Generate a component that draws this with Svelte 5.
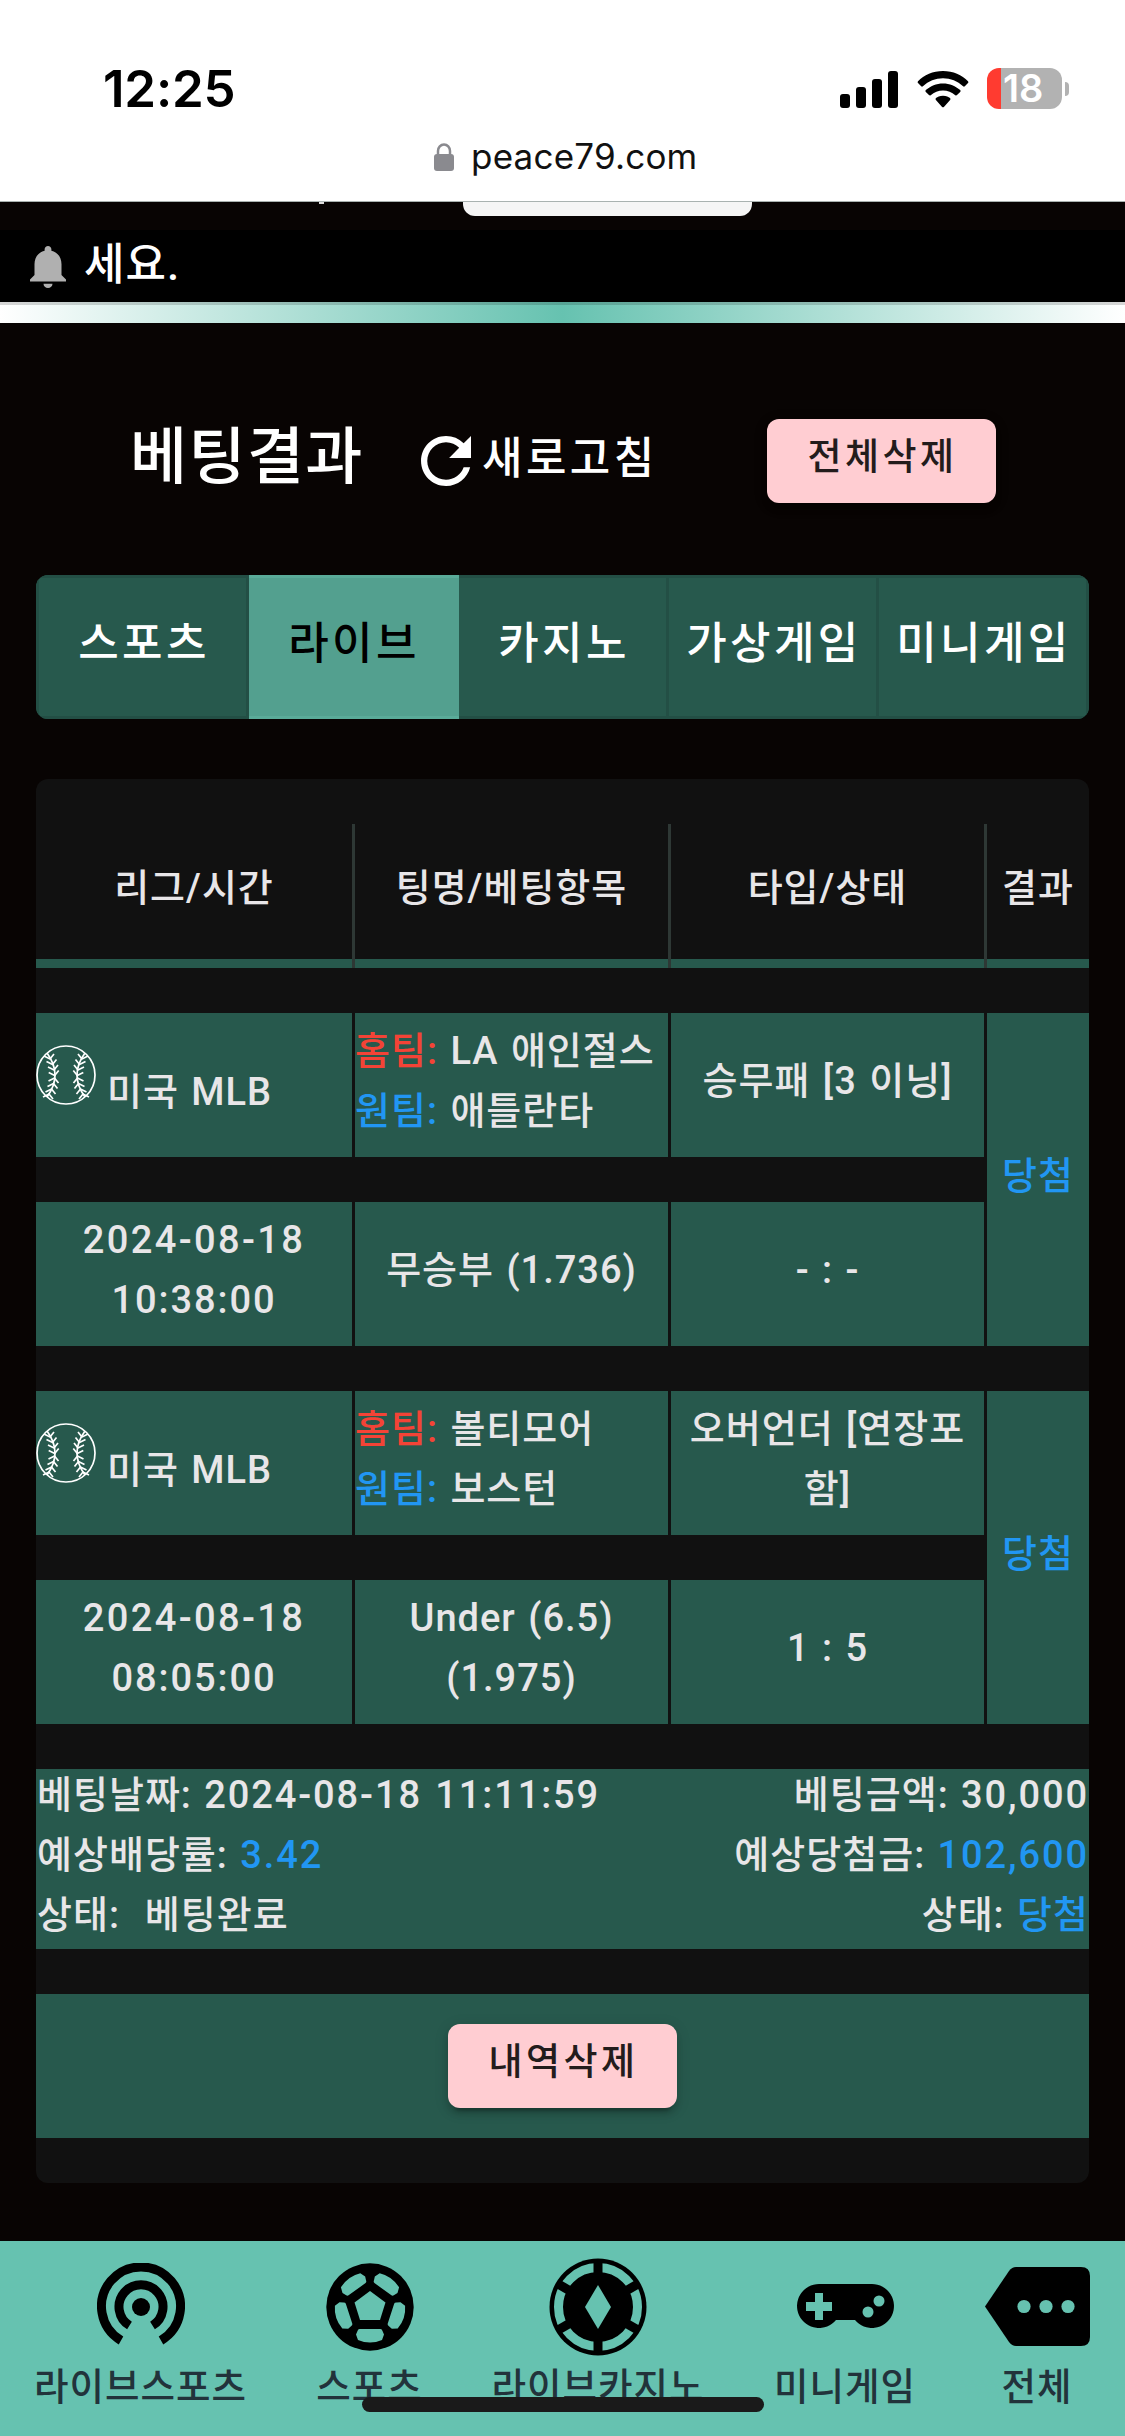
<script>
	const tabs = ['스포츠', '라이브', '카지노', '가상게임', '미니게임']
	let activeTab = '라이브'

	const headers = ['리그/시간', '팅명/베팅항목', '타입/상태', '결과']

	const bets = [
		{
			league: '미국 MLB',
			home: 'LA 애인절스',
			away: '애틀란타',
			type: '승무패 [3 이닝]',
			date: '2024-08-18',
			time: '10:38:00',
			pick: ['무승부 (1.736)'],
			score: '- : -',
			result: '당첨'
		},
		{
			league: '미국 MLB',
			home: '볼티모어',
			away: '보스턴',
			type: '오버언더 [연장포함]',
			date: '2024-08-18',
			time: '08:05:00',
			pick: ['Under (6.5)', '(1.975)'],
			score: '1 : 5',
			result: '당첨'
		}
	]

	// x, y of each stitch along the left seam of the baseball
	const stitches = [
		[14, 13], [16.5, 18.5], [18, 24], [18.7, 29.5],
		[18.5, 35], [17.5, 40.5], [15.5, 46], [13, 51]
	]
</script>

<svelte:head>
	<title>베팅결과</title>
</svelte:head>

<div class="phone">
	<header class="status">
		<span class="clock">12:25</span>
		<div class="indicators">
			<svg width="59" height="38" viewBox="0 0 59 38">
				<rect x="0" y="24" width="10" height="14" rx="3" />
				<rect x="16" y="17" width="10" height="21" rx="3" />
				<rect x="32" y="9" width="10" height="29" rx="3" />
				<rect x="48" y="1" width="10" height="37" rx="3" />
			</svg>
			<svg class="wifi" width="52" height="38" viewBox="0 0 52 38">
				<path d="M26 1C16 1 7 5 1 11.3q-.9.9 0 1.8l3.200 3.200q.8.8 1.700 0C11.500 11 18.400 8.300 26 8.300S40.500 11 46.100 16.300q.9.8 1.700 0L51 13.100q.9-.9 0-1.800C45 5 36 1 26 1z" />
				<path d="M26 13.400c-6.600 0-12.700 2.500-17.200 6.700q-.9.900 0 1.800l3.200 3.200q.8.8 1.700.1c3.400-3 7.700-4.700 12.300-4.700s8.900 1.700 12.300 4.700q.9.7 1.700-.1l3.200-3.200q.9-.9 0-1.800c-4.500-4.200-10.600-6.700-17.200-6.700z" />
				<path d="M26 25.700c-3.500 0-5.400 1-7 2.400q-1 .9-.1 1.800l6.200 7.100q.9.7 1.800 0l6.200-7.100q.9-.9-.1-1.800c-1.600-1.400-3.500-2.400-7-2.400z" />
			</svg>
			<div class="battery"><span>18</span></div>
			<i class="nub"></i>
		</div>
	</header>

	<div class="address">
		<svg width="20" height="28" viewBox="0 0 20 28">
			<path d="M4 13V8a6 6.500 0 0 1 12 0v5" fill="none" stroke="#8a8a8f" stroke-width="2.500" />
			<rect x="0" y="11" width="20" height="17" rx="3" fill="#8a8a8f" />
		</svg>
		<span>peace79.com</span>
	</div>

	<div class="cutoff"><i class="tail"></i><i class="sheet"></i></div>

	<div class="notice">
		<svg width="36" height="42" viewBox="4 2.500 16 19.500" preserveAspectRatio="none">
			<path fill="#b0b0b0" d="M12 22c1.100 0 2-.9 2-2h-4c0 1.100.9 2 2 2zm6-6v-5c0-3.070-1.630-5.640-4.500-6.320V4c0-.83-.67-1.500-1.500-1.500s-1.500.67-1.500 1.500v.68C7.640 5.360 6 7.920 6 11v5l-2 2v1h16v-1l-2-2z" />
		</svg>
		<span>세요.</span>
	</div>
	<div class="shine"></div>

	<main>
		<div class="title-row">
			<h1>베팅결과</h1>
			<div class="refresh">
				<svg width="50" height="50" viewBox="4 4 16 16">
					<path fill="#fff" d="M17.650 6.350A7.958 7.958 0 0 0 12 4c-4.420 0-7.990 3.580-7.990 8s3.570 8 7.990 8c3.730 0 6.840-2.550 7.730-6h-2.080A5.990 5.990 0 0 1 12 18c-3.310 0-6-2.690-6-6s2.690-6 6-6c1.660 0 3.140.69 4.220 1.780L13 11h7V4l-2.350 2.350z" />
				</svg>
				<span>새로고침</span>
			</div>
			<button class="pink">전체삭제</button>
		</div>

		<nav class="tabs">
			{#each tabs as tab}
				<button class:active={tab === activeTab} on:click={() => (activeTab = tab)}>{tab}</button>
			{/each}
		</nav>

		<section class="panel">
			<div class="grid head">
				{#each headers as header}
					<div class="cell">{header}</div>
				{/each}
			</div>

			{#each bets as bet}
				<div class="grid bet">
					<div class="cell league">
						<svg width="60" height="60" viewBox="0 0 60 60" fill="none" stroke="#fff" stroke-width="1.700">
							<circle cx="30" cy="30" r="29" />
							{#each ['', 'translate(60 0) scale(-1 1)'] as side}
								<g transform={side}>
									<path d="M11 8Q27 30 11 52" />
									{#each stitches as [x, y]}
										{#if y < 32}
											<path d="M{x - 6} {y - 2}L{x} {y + 1}L{x + 4} {y - 4}" />
										{:else}
											<path d="M{x - 6} {y + 1}L{x} {y - 2}L{x + 4} {y + 3}" />
										{/if}
									{/each}
								</g>
							{/each}
						</svg>
						<span>{bet.league}</span>
					</div>
					<div class="cell teams">
						<div><b class="red">홈팀:</b> {bet.home}</div>
						<div><b class="blue">원팀:</b> {bet.away}</div>
					</div>
					<div class="cell type">{bet.type}</div>
					<div class="cell result blue">{bet.result}</div>
					<div class="cell"><div class="date">{bet.date}</div><div class="num">{bet.time}</div></div>
					<div class="cell">
						{#each bet.pick as line}
							<div>{line}</div>
						{/each}
					</div>
					<div class="cell">{bet.score}</div>
				</div>
			{/each}

			<div class="summary">
				<div>
					<p>베팅날짜: <span class="num">2024-08-18 11:11:59</span></p>
					<p>예상배당률: <span class="num blue">3.42</span></p>
					<p>상태: &nbsp;베팅완료</p>
				</div>
				<div class="right">
					<p>베팅금액: <span class="num">30,000</span></p>
					<p>예상당첨금: <span class="num blue">102,600</span></p>
					<p>상태: <span class="blue">당첨</span></p>
				</div>
			</div>

			<div class="remove">
				<button class="pink">내역삭제</button>
			</div>
		</section>
	</main>

	<footer>
		<a>
			<svg width="88" height="88" viewBox="0 0 88 88" fill="none" stroke="#000" stroke-width="9">
				<circle cx="44" cy="44" r="9" fill="#000" stroke="none" />
				<path d="M32.500 62.500A22 22 0 1 1 55.500 62.500" />
				<path d="M24 77.500A39.500 39.500 0 1 1 64 77.500" />
			</svg>
			<span>라이브스포츠</span>
		</a>
		<a>
			<svg width="88" height="88" viewBox="0 0 88 88">
				<circle cx="44" cy="44" r="43.700" />
				<g fill="#66c2b0">
					<path d="M44 28L59.500 39.500L54 57H34L28.500 39.500z" />
					{#each [0, 72, 144, 216, 288] as deg}
						<path transform="rotate({deg} 44 44)" d="M33.500 66H54.500Q56 66 56.500 68L58 71.500L56 77Q44 82 32 77L30 71.500L31.500 68Q32 66 33.500 66z" />
					{/each}
				</g>
			</svg>
			<span>스포츠</span>
		</a>
		<a>
			<svg width="98" height="98" viewBox="0 0 98 98">
				<circle cx="49" cy="49" r="48.500" />
				<circle cx="49" cy="49" r="39.500" fill="none" stroke="#66c2b0" stroke-width="9" />
				<g stroke="#000" stroke-width="9">
					<path d="M49 2v94" />
					<path d="M49 2v94" transform="rotate(60 49 49)" />
					<path d="M49 2v94" transform="rotate(120 49 49)" />
				</g>
				<path fill="#66c2b0" d="M49 27L62 49L49 71L36 49z" />
			</svg>
			<span>라이브카지노</span>
		</a>
		<a>
			<svg width="97" height="45" viewBox="0 0 97 45">
				<path d="M22 0h53a22 22 0 1 1-17 36H39A22 22 0 1 1 22 0z" />
				<path fill="#66c2b0" d="M18 9h8v9h9v9h-9v9h-8v-9H9v-9h9z" />
				<circle cx="82" cy="17" r="5.500" fill="#66c2b0" />
				<circle cx="71" cy="28" r="5.500" fill="#66c2b0" />
			</svg>
			<span>미니게임</span>
		</a>
		<a>
			<svg width="105" height="79" viewBox="0 0 105 79">
				<path d="M0 39.500L24 4Q27 0 31 0H96Q105 0 105 9V70Q105 79 96 79H31Q27 79 24 75z" />
				<g fill="#66c2b0">
					<circle cx="39" cy="39.500" r="6.600" />
					<circle cx="61" cy="39.500" r="6.600" />
					<circle cx="83" cy="39.500" r="6.600" />
				</g>
			</svg>
			<span>전체</span>
		</a>
		<i class="home-bar"></i>
	</footer>
</div>

<style>
	:global(body) {
		background: #080403;
	}

	.phone {
		width: 1125px;
		height: 2436px;
		overflow: hidden;
		display: flex;
		flex-direction: column;
		background: #080403;
		color: #e8e6e8;
		font-family: Roboto, "Noto Sans CJK KR", sans-serif;
		font-size: 38px;
		font-weight: 500;
		letter-spacing: 1px;
		word-spacing: 2px;
	}

	.phone * {
		box-sizing: border-box;
	}

	svg {
		display: block;
		flex: none;
	}

	/* browser chrome */
	.status {
		height: 132px;
		background: #fff;
		color: #000;
		padding: 68px 56px 0 103px;
		display: flex;
		justify-content: space-between;
	}

	.clock {
		font: 600 51px/42px Inter, sans-serif;
		letter-spacing: -0.2px;
	}

	.indicators {
		display: flex;
		height: 41px;
		align-items: center;
	}

	.wifi {
		margin: 0 18px;
	}

	.battery {
		width: 75px;
		height: 41px;
		border-radius: 12px;
		background: linear-gradient(90deg, #ff3b30 14px, #b2b2b2 14px);
		color: #fff;
		font: 600 38px/41px Inter, sans-serif;
		letter-spacing: 0;
		padding-left: 16px;
	}

	.nub {
		width: 4px;
		height: 14px;
		margin-left: 3px;
		border-radius: 0 5px 5px 0;
		background: #b2b2b2;
	}

	.address {
		height: 70px;
		background: #fff;
		border-bottom: 1px solid #a9b2b0;
		color: #111;
		display: flex;
		gap: 17px;
		padding: 11px 0 0 434px;
		font: 400 35px/26px Inter, sans-serif;
		letter-spacing: 0.2px;
	}

	.cutoff {
		height: 28px;
		display: flex;
		padding-left: 319px;
	}

	.tail {
		width: 5px;
		height: 2px;
		background: #ddd;
		margin-right: 139px;
	}

	.sheet {
		width: 289px;
		height: 14px;
		background: #f5f5f5;
		border-radius: 0 0 12px 12px;
	}

	.notice {
		height: 72px;
		background: #000;
		color: #fff;
		display: flex;
		padding: 16px 0 0 30px;
		gap: 18px;
		font-size: 44px;
		line-height: 38px;
	}

	.shine {
		height: 21px;
		background:
			linear-gradient(rgba(0, 0, 0, 0.16) 3px, transparent 3px),
			linear-gradient(90deg, #fff, #66c2b0 50%, #fff);
	}

	/* title */
	main {
		padding: 0 36px;
		height: 1918px;
	}

	.title-row {
		height: 252px;
		padding: 96px 93px 0 94px;
		display: flex;
		color: #fff;
	}

	h1 {
		margin: 0;
		width: 291px;
		font-size: 62px;
		line-height: 78px;
		font-weight: 500;
		letter-spacing: 1.4px;
	}

	.refresh {
		display: flex;
		width: 346px;
		padding-top: 17px;
		gap: 11px;
		font-size: 44px;
		line-height: 46px;
		letter-spacing: 3.4px;
	}

	button {
		font-family: inherit;
		font-weight: 500;
		border: 0;
	}

	.pink {
		width: 229px;
		height: 84px;
		border-radius: 12px;
		background: #ffcdd2;
		color: #231c1c;
		font-size: 37px;
		letter-spacing: 3.4px;
		padding: 0 0 14px 2px;
		box-shadow: 0 9px 3px -6px rgba(0, 0, 0, 0.2), 0 6px 6px rgba(0, 0, 0, 0.14), 0 3px 15px rgba(0, 0, 0, 0.12);
	}

	.tabs {
		height: 144px;
		border-radius: 12px;
		overflow: hidden;
		display: grid;
		grid-template-columns: 213px repeat(4, 210px);
	}

	.tabs button {
		background: #27594d;
		border: 3px solid #234f45;
		border-left: 0;
		color: #fff;
		font-size: 44px;
		letter-spacing: 3.4px;
		padding: 0 0 14px 3px;
		white-space: nowrap;
	}

	.tabs button:first-child {
		border-left: 3px solid #234f45;
	}

	.tabs .active {
		background: #53a08f;
		border-color: #5aab99;
		border-right: 0;
		color: #000;
		padding-left: 0;
	}

	/* results */
	.panel {
		margin-top: 60px;
		height: 1404px;
		padding-top: 45px;
		border-radius: 12px;
		background: #111;
	}

	.grid {
		display: grid;
		grid-template-columns: 316px 313px 313px 102px;
		gap: 45px 3px;
		margin-bottom: 45px;
	}

	.cell {
		background: #27594d;
		height: 144px;
		padding-bottom: 8px;
		display: flex;
		flex-direction: column;
		align-items: center;
		justify-content: center;
		text-align: center;
		line-height: 60px;
	}

	.head {
		background: #2e3835;
	}

	.head .cell {
		background: #111;
		border-bottom: 9px solid #27594d;
		white-space: nowrap;
	}

	.league {
		flex-direction: row;
		justify-content: flex-start;
		gap: 11px;
	}

	.league svg {
		margin-bottom: 12px;
	}

	.league span {
		padding-top: 22px;
	}

	.teams {
		align-items: flex-start;
		text-align: left;
		white-space: nowrap;
	}

	.teams b {
		font-weight: 500;
	}

	.type {
		word-break: break-all;
	}

	.result {
		grid-area: 1 / 4 / 3 / 5;
		height: auto;
	}

	.date {
		letter-spacing: 2.4px;
	}

	.num {
		letter-spacing: 1.9px;
	}

	.red {
		color: #f44336;
	}

	.blue {
		color: #2196f3;
	}

	.summary {
		height: 180px;
		background: #27594d;
		display: flex;
		justify-content: space-between;
		padding: 0 1px;
		line-height: 60px;
	}

	.summary p {
		margin: 0;
		position: relative;
		top: -4px;
	}

	.right {
		text-align: right;
		margin-right: -1px;
	}

	.remove {
		margin-top: 45px;
		height: 144px;
		background: #27594d;
		display: flex;
		align-items: center;
		justify-content: center;
	}

	/* bottom navigation */
	footer {
		position: relative;
		height: 195px;
		background: #66c2b0;
		color: #22333b;
		display: grid;
		grid-template-columns: 255px 203px 254px 240px 144px;
		padding-left: 13px;
	}

	footer a {
		display: grid;
		grid-template-rows: 131px 40px;
		justify-items: center;
		align-items: center;
		align-content: start;
		white-space: nowrap;
	}

	footer span {
		font-size: 37.5px;
		line-height: 36px;
		margin-top: -11px;
	}

	.home-bar {
		position: absolute;
		left: 362px;
		top: 156px;
		width: 402px;
		height: 15px;
		border-radius: 8px;
		background: #1a1a1a;
	}
</style>
